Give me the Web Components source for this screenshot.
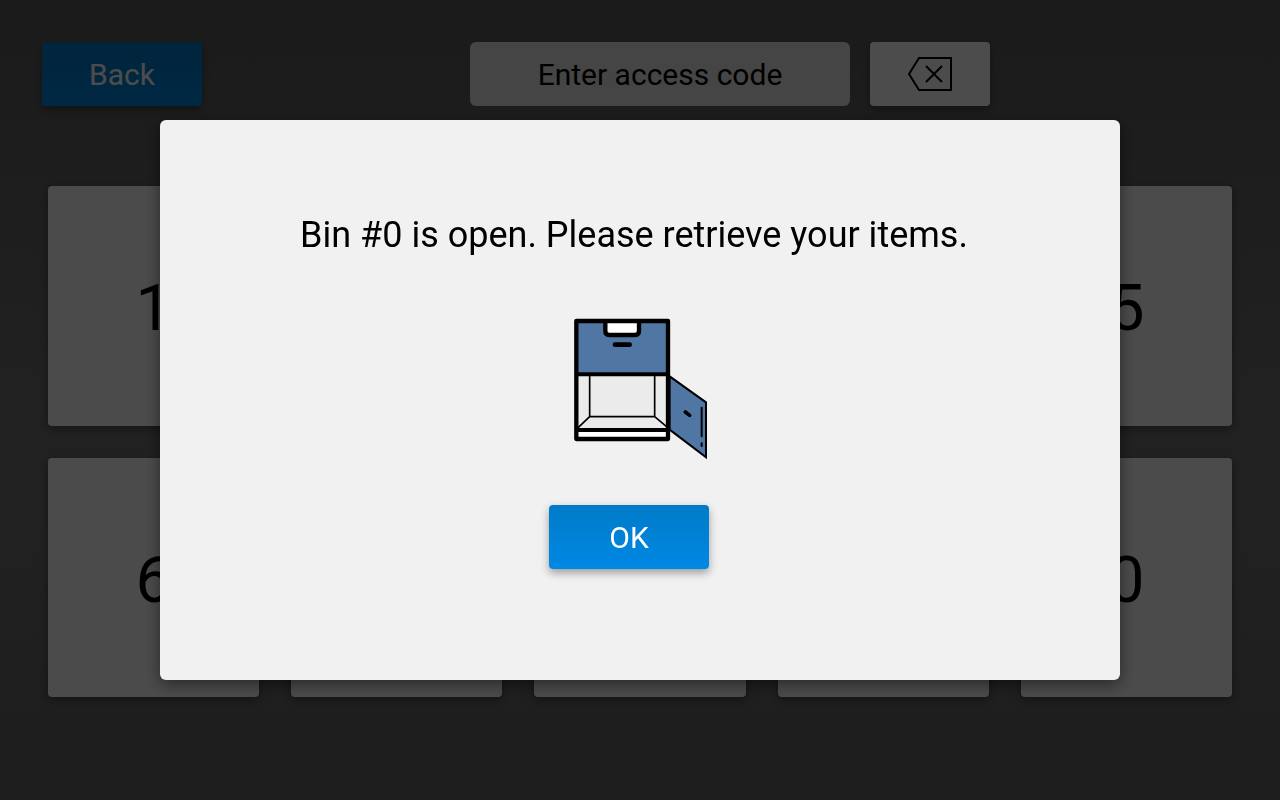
<!DOCTYPE html>
<html lang="en">
<head>
<meta charset="utf-8">
<meta name="viewport" content="width=device-width, initial-scale=1">
<title>Pickup</title>
<style>
    body {
        margin: 0;
        font-family: Roboto, "Liberation Sans", sans-serif;
        color: #000;
        background: #5a5a5a;
    }
</style>
</head>
<body>
<locker-screen>
    <action-button slot="back" variant="primary">Back</action-button>
    <code-entry slot="entry"></code-entry>
    <key-pad slot="keys"></key-pad>
</locker-screen>
<modal-dialog>
    <span slot="message">Bin #0 is open. Please retrieve your items.</span>
    <bin-picture slot="picture"></bin-picture>
    <action-button slot="action" variant="primary">OK</action-button>
</modal-dialog>

<script>
class ActionButton extends HTMLElement {
    constructor() {
        super();
        this.attachShadow({mode: "open"});
        this.shadowRoot.innerHTML = `
            <style>
                :host {
                    display: block;
                    width: 160px;
                    height: 64px;
                }
                button {
                    display: flex;
                    align-items: center;
                    justify-content: center;
                    width: 100%;
                    height: 100%;
                    padding: 0;
                    border: 0;
                    border-radius: 4px;
                    font: inherit;
                    font-size: 30px;
                    color: inherit;
                    background: #fff;
                    box-shadow: 0 4px 8px rgba(0, 0, 0, 0.35);
                }
                :host([variant="primary"]) button {
                    color: #fff;
                    background: linear-gradient(#007bc8, #0088e4);
                }
            </style>
            <button type="button"><slot></slot></button>
        `;
    }
    connectedCallback() {
        const label = this.getAttribute("label");
        if (label) {
            this.shadowRoot.querySelector("button").setAttribute("aria-label", label);
        }
    }
}

class CodeEntry extends HTMLElement {
    constructor() {
        super();
        this.attachShadow({mode: "open"});
        this.shadowRoot.innerHTML = `
            <style>
                :host {
                    display: flex;
                    gap: 20px;
                }
                input {
                    box-sizing: border-box;
                    width: 380px;
                    height: 64px;
                    padding: 0 16px;
                    border: 0;
                    border-radius: 6px;
                    font: inherit;
                    font-size: 30px;
                    text-align: center;
                    color: #000;
                    background: #e6e6e6;
                }
                input::placeholder {
                    color: #000;
                    opacity: 1;
                }
                action-button {
                    width: 120px;
                }
                svg {
                    display: block;
                    width: 44px;
                    height: 36px;
                }
            </style>
            <input type="text" inputmode="numeric" aria-label="Access code" placeholder="Enter access code">
            <action-button label="Delete">
                <svg viewBox="0 0 44 36" fill="none" stroke="#000" stroke-width="2">
                    <path d="M1 18 11 2H43V34H11Z"/>
                    <path d="M18 10 34 26M34 10 18 26"/>
                </svg>
            </action-button>
        `;
    }
}

class KeyPad extends HTMLElement {
    constructor() {
        super();
        this.attachShadow({mode: "open"});
        this.shadowRoot.innerHTML = `
            <style>
                :host {
                    display: grid;
                    grid-template-columns: repeat(5, 1fr);
                    grid-auto-rows: 1fr;
                    gap: 32px;
                }
                button {
                    padding: 6px 0 0;
                    border: 0;
                    border-radius: 4px;
                    font: inherit;
                    font-size: 64px;
                    color: #000;
                    background: #fcfcfc;
                    box-shadow: 0 3px 8px rgba(0, 0, 0, 0.4);
                }
            </style>
        `;
        for (const digit of "1234567890") {
            const key = document.createElement("button");
            key.type = "button";
            key.textContent = digit;
            this.shadowRoot.appendChild(key);
        }
    }
}

class LockerScreen extends HTMLElement {
    constructor() {
        super();
        this.attachShadow({mode: "open"});
        this.shadowRoot.innerHTML = `
            <style>
                :host {
                    display: flex;
                    flex-direction: column;
                    box-sizing: border-box;
                    min-height: 100vh;
                    background: linear-gradient(#5a5a5a, #707070 50%, #707070 65%, #646464);
                }
                header {
                    display: flex;
                    gap: 20px;
                    padding: 42px 42px 0;
                }
                .entry {
                    display: flex;
                    flex: 1;
                    justify-content: center;
                }
                main {
                    display: grid;
                    flex: 1;
                    padding: 80px 48px 103px;
                }
            </style>
            <header>
                <slot name="back"></slot>
                <div class="entry"><slot name="entry"></slot></div>
            </header>
            <main><slot name="keys"></slot></main>
        `;
    }
}

// Cabinet with its lower door swung open
class BinPicture extends HTMLElement {
    constructor() {
        super();
        this.attachShadow({mode: "open"});
        this.shadowRoot.innerHTML = `
            <style>
                :host {
                    display: block;
                    width: 148px;
                    height: 144px;
                }
                svg {
                    display: block;
                    width: 100%;
                    height: 100%;
                }
            </style>
            <svg viewBox="0 36 444 432" fill="none" stroke="#000" stroke-linejoin="round" aria-hidden="true">
                <path d="M49 48H324V208H49Z" fill="#5076a3" stroke="none"/>
                <path d="M49 208H324V375H49Z" fill="#ebebec" stroke="none"/>
                <path d="M49 375H324V402H49Z" fill="#fff" stroke="none"/>
                <path d="M89 210V335H284V210M89 335 52 370M284 335 326 370" stroke-width="5"/>
                <path d="M136 48V78Q136 90 148 90H225Q237 90 237 78V48" fill="#fff" stroke-width="13"/>
                <path d="M165 119H209" stroke-width="14" stroke-linecap="round"/>
                <path d="M49 208H324M49 375H324" stroke-width="12"/>
                <path d="M49 48H324V402H49Z" stroke-width="13"/>
                <path d="M329 214 438 292V457L329 374Z" fill="#5076a3" stroke-width="6" stroke-linejoin="miter"/>
                <path d="M376 321 389 331" stroke-width="11" stroke-linecap="round"/>
                <path d="M425 308V394M425 415V423" stroke-width="6" stroke-linecap="round"/>
            </svg>
        `;
    }
}

class ModalDialog extends HTMLElement {
    constructor() {
        super();
        this.attachShadow({mode: "open"});
        this.shadowRoot.innerHTML = `
            <style>
                :host {
                    position: fixed;
                    inset: 0;
                    display: grid;
                    place-items: center;
                    background: rgba(0, 0, 0, 0.7);
                }
                section {
                    display: flex;
                    flex-direction: column;
                    align-items: center;
                    justify-content: center;
                    box-sizing: border-box;
                    width: 75%;
                    min-height: 70%;
                    padding: 0 12px 18px 0;
                    border-radius: 6px;
                    background: #f1f1f1;
                    box-shadow: 0 4px 16px rgba(0, 0, 0, 0.5);
                }
                p {
                    margin: 0 0 60px;
                    font-size: 36px;
                    line-height: 44px;
                    text-align: center;
                }
                footer {
                    margin-top: 44px;
                    padding-right: 10px;
                }
            </style>
            <section role="dialog" aria-modal="true" aria-labelledby="message">
                <p id="message"><slot name="message"></slot></p>
                <slot name="picture"></slot>
                <footer><slot name="action"></slot></footer>
            </section>
        `;
    }
}

customElements.define("action-button", ActionButton);
customElements.define("code-entry", CodeEntry);
customElements.define("key-pad", KeyPad);
customElements.define("locker-screen", LockerScreen);
customElements.define("bin-picture", BinPicture);
customElements.define("modal-dialog", ModalDialog);
</script>
</body>
</html>
